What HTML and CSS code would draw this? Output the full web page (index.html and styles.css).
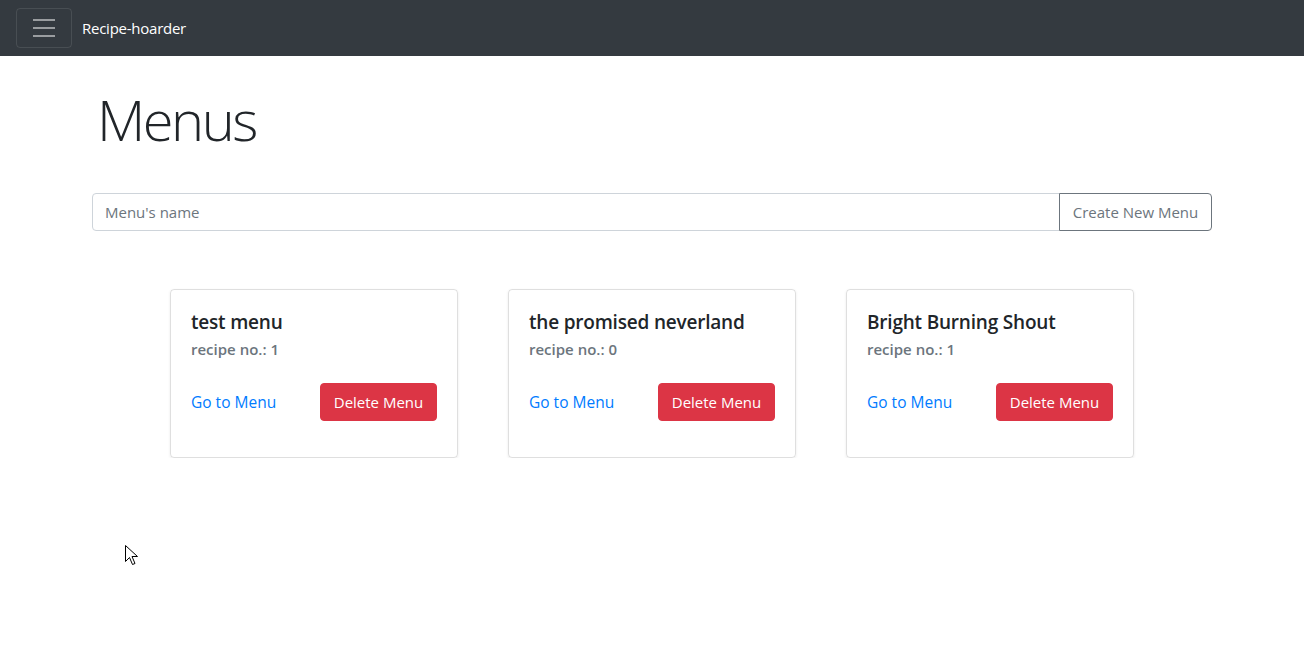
FILE: index.html
```html
<!DOCTYPE html>
<html lang="en">
<head>
<meta charset="utf-8">
<title>Recipe-hoarder</title>
<link rel="stylesheet" href="styles.css">
</head>
<body>
<nav class="navbar">
  <button class="toggler" aria-label="Toggle navigation">
    <svg class="toggler-icon" width="30" height="30" viewBox="0 0 30 30"><path d="M4 7h22M4 15h22M4 23h22" stroke="rgba(255,255,255,0.5)" stroke-width="2" stroke-linecap="butt" fill="none"/></svg>
  </button>
  <a class="brand" href="#">Recipe-hoarder</a>
</nav>
<main class="container">
  <h1 class="display">Menus</h1>
  <form class="input-group">
    <input class="form-control" type="text" placeholder="Menu's name">
    <button class="btn btn-outline" type="button">Create New Menu</button>
  </form>
  <section class="cards">
    <div class="card">
      <h5 class="card-title">test menu</h5>
      <h6 class="card-subtitle">recipe no.: 1</h6>
      <div class="card-actions">
        <a class="card-link" href="#">Go to Menu</a>
        <button class="btn btn-danger" type="button">Delete Menu</button>
      </div>
    </div>
    <div class="card">
      <h5 class="card-title">the promised neverland</h5>
      <h6 class="card-subtitle">recipe no.: 0</h6>
      <div class="card-actions">
        <a class="card-link" href="#">Go to Menu</a>
        <button class="btn btn-danger" type="button">Delete Menu</button>
      </div>
    </div>
    <div class="card">
      <h5 class="card-title">Bright Burning Shout</h5>
      <h6 class="card-subtitle">recipe no.: 1</h6>
      <div class="card-actions">
        <a class="card-link" href="#">Go to Menu</a>
        <button class="btn btn-danger" type="button">Delete Menu</button>
      </div>
    </div>
  </section>
</main>
<svg class="cursor" width="13" height="21" viewBox="0 0 13 21"><path d="M0.5 0.5V16.5L4.5 12.5L7.5 19.5L10 18.5L7 11.5H12.5Z" fill="#fff" stroke="#000" stroke-width="1" stroke-linejoin="miter"/></svg>
</body>
</html>
```
FILE: styles.css
```css
* { box-sizing: border-box; }
html, body { margin: 0; padding: 0; }
body {
  font-family: "Open Sans", "Noto Sans", sans-serif;
  font-size: 16px;
  line-height: 1.5;
  color: #212529;
  background: #fff;
}
.navbar {
  height: 56px;
  background: #343a40;
  display: flex;
  align-items: center;
  padding: 0 16px;
}
.toggler {
  width: 56px;
  height: 40px;
  padding: 0;
  display: flex;
  align-items: center;
  justify-content: center;
  background: transparent;
  border: 1px solid rgba(255,255,255,0.1);
  border-radius: 4px;
  margin-right: 10px;
}
.toggler-icon { display: block; }
.brand {
  color: #fff;
  text-decoration: none;
  font-size: 15px;
  letter-spacing: -0.25px;
  line-height: 1.5;
}
.container {
  width: 1140px;
  margin: 0 auto;
  padding: 0 15px;
}
.display {
  font-size: 56px;
  font-weight: 300;
  line-height: 1.2;
  margin: 30px 0 40px;
  letter-spacing: -2.5px;
}
.input-group {
  display: flex;
  margin: 0 -5px;
  height: 38px;
}
.form-control {
  flex: 1;
  min-width: 0;
  height: 38px;
  font: inherit;
  font-size: 15px;
  color: #495057;
  padding: 6px 12px;
  border: 1px solid #ced4da;
  border-radius: 4px 0 0 4px;
  outline: none;
}
.form-control::placeholder { color: #6c757d; }
.btn {
  font: inherit;
  font-size: 15px;
  line-height: 24px;
  padding: 6px 12px;
  border-radius: 4px;
  border: 1px solid transparent;
  cursor: pointer;
}
.btn-outline {
  width: 153px;
  color: #6c757d;
  border-color: #6c757d;
  background: #fff;
  border-radius: 0 4px 4px 0;
  margin-left: -1px;
}
.btn-danger {
  color: #fff;
  background: #dc3545;
  border-color: #dc3545;
  width: 117px;
}
.cards {
  display: flex;
  justify-content: center;
  gap: 50px;
  margin-top: 58px;
}
.card {
  width: 288px;
  border: 1px solid rgba(0,0,0,0.125);
  border-radius: 4px;
  box-shadow: 0 1px 3px rgba(0,0,0,0.08);
  padding: 21px 20px 36px;
}
.card-title {
  font-size: 19px;
  font-weight: 600;
  line-height: 1.2;
  margin: 0 0 6px;
  letter-spacing: -0.2px;
}
.card-subtitle {
  font-size: 15px;
  font-weight: 600;
  line-height: 1.2;
  color: #6c757d;
  margin: 0;
}
.card-actions {
  display: flex;
  justify-content: space-between;
  align-items: center;
  margin-top: 25px;
}
.card-link {
  color: #007bff;
  text-decoration: none;
  font-size: 15.5px;
  line-height: 26px;
}
.cursor {
  position: absolute;
  left: 125px;
  top: 545px;
}
```
